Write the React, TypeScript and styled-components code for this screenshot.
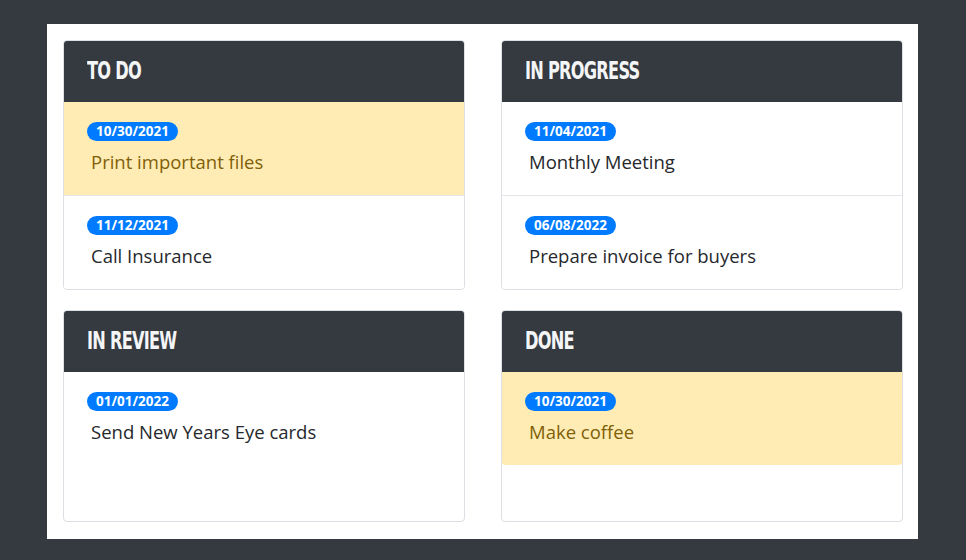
import React from "react";
import styled, { createGlobalStyle } from "styled-components";

const Global = createGlobalStyle`
  html, body { margin: 0; padding: 0; background: #343a40; }
  body { font-family: "Open Sans", "Noto Sans", sans-serif; }
  * { box-sizing: border-box; }
`;

const Page = styled.div`
  width: 966px;
  height: 560px;
  padding: 24px 48px 21px 47px;
  background: #343a40;
`;

const Board = styled.div`
  background: #ffffff;
  padding: 16px 15px 17px 16px;
  display: grid;
  grid-template-columns: 402px 402px;
  column-gap: 36px;
  row-gap: 20px;
`;

const Card = styled.section`
  border: 1px solid #dcdfe3;
  border-radius: 4px;
  min-height: 212px;
  display: flex;
  flex-direction: column;
  overflow: hidden;
`;

const Header = styled.h2`
  margin: -1px -1px 0 -1px;
  height: 62px;
  background: #343a40;
  color: #f4f5f7;
  padding: 0 24px;
  display: flex;
  align-items: center;
  font-weight: 700;
  font-size: 25px;
  text-transform: uppercase;
`;

const HeaderText = styled.span`
  display: inline-block;
  font-family: "DejaVu Sans", sans-serif;
  font-stretch: condensed;
  font-weight: 700;
  font-size: 24px;
  letter-spacing: -1px;
  transform: scaleX(0.75);
  transform-origin: left center;
  white-space: nowrap;
`;

const Item = styled.div<{ $warn?: boolean }>`
  display: flex;
  flex-direction: column;
  align-items: flex-start;
  padding: 20px 24px 20px 23px;
  background: ${(p) => (p.$warn ? "#ffecb5" : "#ffffff")};
  color: ${(p) => (p.$warn ? "#806007" : "#25282c")};
  border-bottom: 1px solid #e3e5e8;
  &:last-child {
    border-bottom: none;
    border-radius: 0 0 3px 3px;
  }
`;

const Badge = styled.span`
  display: block;
  height: 19px;
  line-height: 19px;
  padding: 0 9px;
  border-radius: 10px;
  background: #007bff;
  color: #ffffff;
  font-weight: 700;
  font-size: 13.5px;
`;

const Title = styled.div`
  margin-top: 7px;
  margin-left: 4px;
  font-size: 18.5px;
  line-height: 27px;
`;

type Task = { date: string; title: string; warn?: boolean };
const columns: { name: string; tasks: Task[] }[] = [
  {
    name: "To Do",
    tasks: [
      { date: "10/30/2021", title: "Print important files", warn: true },
      { date: "11/12/2021", title: "Call Insurance" },
    ],
  },
  {
    name: "In Progress",
    tasks: [
      { date: "11/04/2021", title: "Monthly Meeting" },
      { date: "06/08/2022", title: "Prepare invoice for buyers" },
    ],
  },
  {
    name: "In Review",
    tasks: [{ date: "01/01/2022", title: "Send New Years Eye cards" }],
  },
  {
    name: "Done",
    tasks: [{ date: "10/30/2021", title: "Make coffee", warn: true }],
  },
];

export default function App() {
  return (
    <>
      <Global />
      <Page>
        <Board>
          {columns.map((c) => (
            <Card key={c.name}>
              <Header>
                <HeaderText>{c.name}</HeaderText>
              </Header>
              {c.tasks.map((t) => (
                <Item key={t.title} $warn={t.warn}>
                  <Badge>{t.date}</Badge>
                  <Title>{t.title}</Title>
                </Item>
              ))}
            </Card>
          ))}
        </Board>
      </Page>
    </>
  );
}
